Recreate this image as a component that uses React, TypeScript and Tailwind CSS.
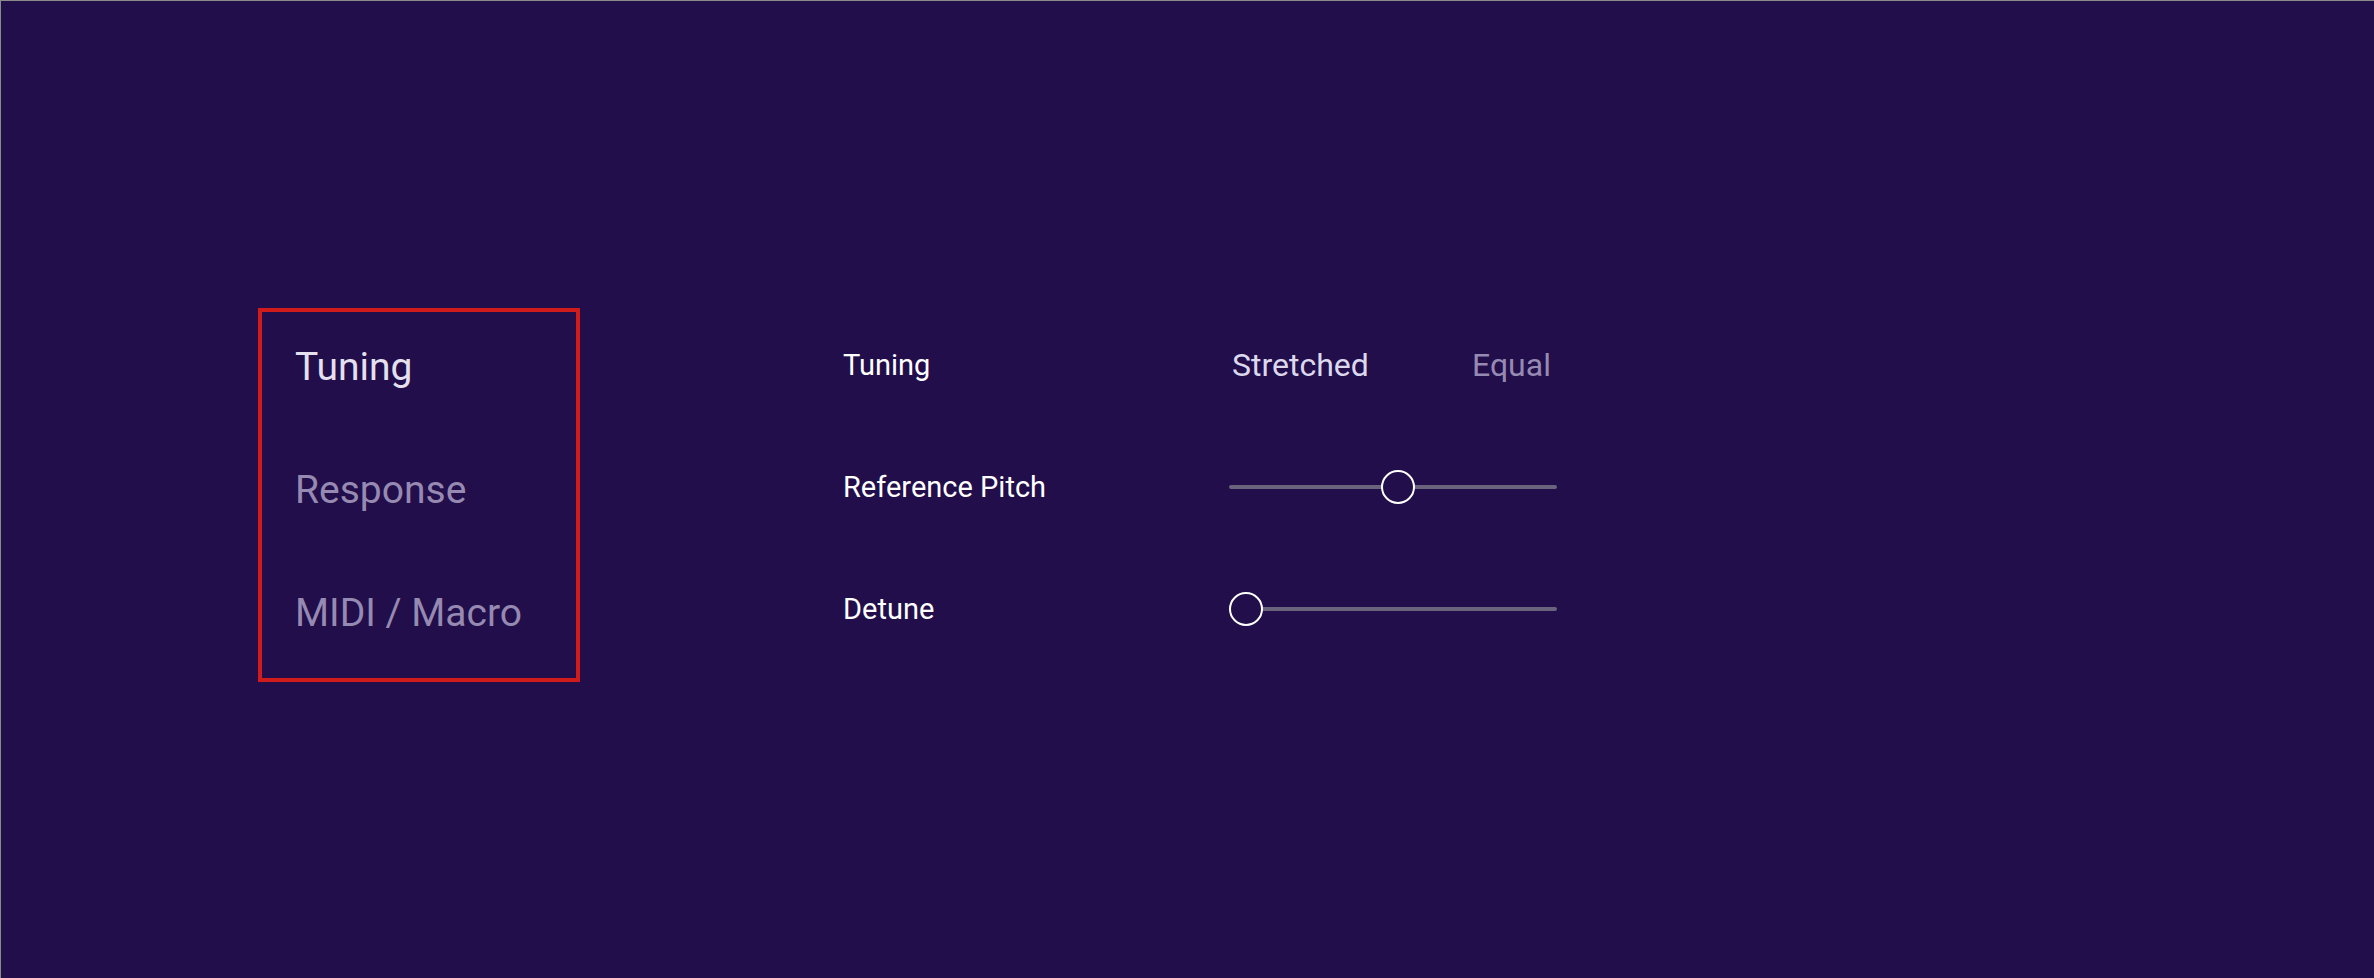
import React from "react";

function Slider({ offset }: { offset: number }) {
  return (
    <div className="relative h-[34px] w-[328px]">
      <div className="absolute left-0 right-0 top-[15px] h-[4px] rounded-full bg-[#6a637d]" />
      <div
        className="absolute top-0 h-[34px] w-[34px] rounded-full border-2 border-white bg-[#210e4a]"
        style={{ left: offset }}
      />
    </div>
  );
}

export default function App() {
  return (
    <div
      className="flex h-[978px] w-full items-start border-l border-t border-[#8a8a8a] bg-[#210e4a] pl-[257px] pt-[303px]"
      style={{ fontFamily: "Roboto, 'Noto Sans', sans-serif" }}
    >
      <div className="mt-[4px] flex h-[374px] w-[322px] flex-col gap-[84px] border-4 border-[#d01b1b] pl-[33px] pt-[36px] text-[39px] leading-none">
        <div className="text-[#e4e0f0]">Tuning</div>
        <div className="text-[#968ab2]">Response</div>
        <div className="text-[#968ab2]">MIDI / Macro</div>
      </div>
      <div className="ml-[263px] flex flex-col text-[29px] leading-none text-white">
        <div className="flex h-[122px] items-center">
          <div className="w-[386px]">Tuning</div>
          <div className="flex items-center text-[32px]">
            <span className="ml-[3px] w-[240px] text-[#dcd8ee]">Stretched</span>
            <span className="text-[#968ab2]">Equal</span>
          </div>
        </div>
        <div className="flex h-[122px] items-center">
          <div className="w-[386px]">Reference Pitch</div>
          <Slider offset={152} />
        </div>
        <div className="flex h-[122px] items-center">
          <div className="w-[386px]">Detune</div>
          <Slider offset={0} />
        </div>
      </div>
    </div>
  );
}
